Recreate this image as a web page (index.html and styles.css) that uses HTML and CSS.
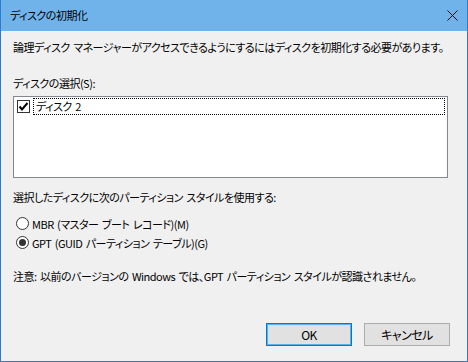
FILE: index.html
```html
<!DOCTYPE html>
<html lang="ja">
<head>
<meta charset="utf-8">
<title>ディスクの初期化</title>
<link rel="stylesheet" href="styles.css">
</head>
<body>
<div class="dialog">
  <div class="titlebar">
    <span class="title">ディスクの初期化</span>
    <span class="close"><svg width="11" height="11" viewBox="0 0 11 11"><path d="M0.5 0.5L10.5 10.5M10.5 0.5L0.5 10.5" stroke="#000" stroke-width="1"/></svg></span>
  </div>
  <div class="content">
    <p class="intro">論理ディスク マネージャーがアクセスできるようにするにはディスクを初期化する必要があります。</p>
    <p class="label">ディスクの選択(S):</p>
    <div class="listbox">
      <div class="row focused">
        <span class="check"><svg width="11" height="11" viewBox="0 0 11 11"><path d="M1.5 5.5L4 8.5L9.5 2" fill="none" stroke="#000" stroke-width="2"/></svg></span>
        <span>ディスク 2</span>
      </div>
    </div>
    <p class="label part">選択したディスクに次のパーティション スタイルを使用する:</p>
    <div class="radios">
      <div class="radio"><span class="dot"></span><span>MBR (マスター ブート レコード)(M)</span></div>
      <div class="radio"><span class="dot on"></span><span>GPT (GUID パーティション テーブル)(G)</span></div>
    </div>
    <p class="note">注意: 以前のバージョンの Windows では、GPT パーティション スタイルが認識されません。</p>
    <div class="buttons">
      <button class="btn default">OK</button>
      <button class="btn">キャンセル</button>
    </div>
  </div>
</div>
</body>
</html>
```

FILE: styles.css
```css
/* Windows 10 style dialog */

html, body
{ margin: 0;
padding: 0;
}

body
{ font-family: "Noto Sans CJK JP", "Noto Sans", sans-serif;
font-size: 11px;
letter-spacing: -0.5px;
word-spacing: 1.5px;
font-feature-settings: "palt";
color: #000;
background: #f0f0f0;
}

.dialog
{ width: 468px;
height: 362px;
box-sizing: border-box;
border: 1px solid #2b7ccf;
border-top: none;
background: #f0f0f0;
display: flex;
flex-direction: column;
}

.titlebar
{ height: 31px;
background: #6fb3ea;
display: flex;
align-items: center;
justify-content: space-between;
padding-left: 9px;
padding-right: 9px;
}

.title
{ line-height: 16px;
padding-bottom: 1px;
}

.close
{ display: flex;
}

.content
{ padding: 0 19px 0 12px;
display: flex;
flex-direction: column;
flex: 1;
}

p
{ margin: 0;
line-height: 16px;
}

.intro
{ margin-top: 8px;
white-space: nowrap;
}

.label
{ margin-top: 20px;
}

.listbox
{ margin-top: 5px;
height: 82px;
box-sizing: border-box;
border: 1px solid #828790;
background: #fff;
padding: 1px 2px 0 1px;
}

.row
{ height: 17px;
box-sizing: border-box;
display: flex;
align-items: center;
gap: 3px;
padding-left: 2px;
}

.row.focused span:last-child
{ flex: 1;
height: 17px;
line-height: 15px;
box-sizing: border-box;
border: 1px dotted #000;
padding-left: 2px;
}

.check
{ width: 13px;
height: 13px;
box-sizing: border-box;
border: 1px solid #333;
background: #fff;
display: flex;
align-items: center;
justify-content: center;
flex: none;
}

.label.part
{ margin-top: 11px;
}

.radios
{ margin-top: 9px;
}

.radio
{ height: 19px;
display: flex;
align-items: center;
gap: 3px;
padding-left: 3px;
}

.dot
{ width: 13px;
height: 13px;
box-sizing: border-box;
border: 1px solid #333;
border-radius: 50%;
background: #fff;
display: flex;
align-items: center;
justify-content: center;
}

.dot.on::after
{ content: "";
width: 7px;
height: 7px;
border-radius: 50%;
background: #333;
}

.note
{ margin-top: 16px;
white-space: nowrap;
}

.buttons
{ margin-top: auto;
margin-bottom: 15px;
margin-right: -2px;
display: flex;
justify-content: flex-end;
gap: 12px;
}

.btn
{ width: 86px;
height: 23px;
box-sizing: border-box;
font: inherit;
font-size: 12px;
letter-spacing: -0.5px;
font-feature-settings: "palt";
border: 1px solid #adadad;
background: #e1e1e1;
color: #000;
padding: 0;
}

.btn.default
{ border: 1px solid #0078d7;
box-shadow: inset 0 0 0 1px #5ab0ee;
}
```
